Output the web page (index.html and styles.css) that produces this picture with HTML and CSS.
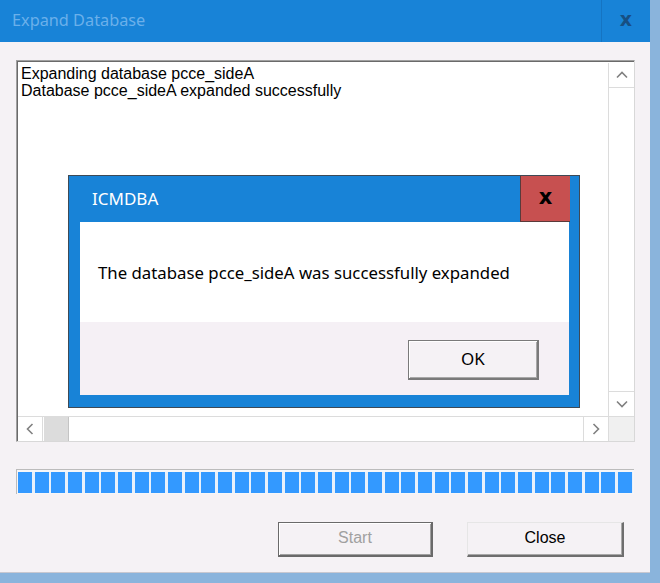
FILE: index.html
```html
<!DOCTYPE html>
<html>
<head>
<meta charset="utf-8">
<link rel="stylesheet" href="styles.css">
</head>
<body>
<div class="window">
  <div class="titlebar">
    <div class="title">Expand Database</div>
    <div class="tclose">x</div>
  </div>
  <div class="client">
    <div class="listbox">
      <div class="listtext">
        <div>Expanding database pcce_sideA</div>
        <div>Database pcce_sideA expanded successfully</div>
      </div>
      <div class="vscroll">
        <div class="arrowbtn"><svg width="14" height="10" viewBox="0 0 14 10"><path d="M2 7.5 L7 2.5 L12 7.5" fill="none" stroke="#808080" stroke-width="1.6"/></svg></div>
        <div class="track"></div>
        <div class="arrowbtn"><svg width="14" height="10" viewBox="0 0 14 10"><path d="M2 2.5 L7 7.5 L12 2.5" fill="none" stroke="#808080" stroke-width="1.6"/></svg></div>
      </div>
      <div class="hscroll">
        <div class="arrowbtn h"><svg width="10" height="14" viewBox="0 0 10 14"><path d="M7.5 2 L2.5 7 L7.5 12" fill="none" stroke="#808080" stroke-width="1.6"/></svg></div>
        <div class="thumb"></div>
        <div class="htrack"></div>
        <div class="arrowbtn h"><svg width="10" height="14" viewBox="0 0 10 14"><path d="M2.5 2 L7.5 7 L2.5 12" fill="none" stroke="#808080" stroke-width="1.6"/></svg></div>
      </div>
      <div class="corner"></div>
    </div>
    <div class="progress"><div class="fill"></div></div>
    <div class="buttons">
      <button class="btn start">Start</button>
      <button class="btn close">Close</button>
    </div>
  </div>

  <div class="dialog">
    <div class="dtitlebar">
      <div class="dtitle">ICMDBA</div>
      <div class="dclose">x</div>
    </div>
    <div class="dbody">
      <div class="dmsg">The database pcce_sideA was successfully expanded</div>
      <div class="dfoot">
        <button class="okbtn">OK</button>
      </div>
    </div>
  </div>
</div>
</body>
</html>
```

FILE: styles.css
```css
html, body {
  margin: 0;
  padding: 0;
}
body {
  width: 660px;
  height: 583px;
  background: #8ab4dc;
  overflow: hidden;
}
.window {
  position: relative;
  width: 650px;
  height: 572px;
  background: #f5f2f5;
  border-bottom: 1px solid #c8c8d0;
  display: flex;
  flex-direction: column;
}
.titlebar {
  height: 42px;
  background: #1883d7;
  display: flex;
  align-items: stretch;
}
.title {
  flex: 1;
  padding-left: 12px;
  line-height: 41px;
  font-family: "Noto Sans", "Open Sans", sans-serif;
  font-size: 16.3px;
  color: #6bb0ea;
}
.tclose {
  width: 48px;
  border-left: 1px solid #1574c2;
  text-align: center;
  line-height: 38px;
  font-family: "DejaVu Sans", sans-serif;
  font-weight: bold;
  font-size: 19px;
  color: #174f82;
}
.client {
  flex: 1;
  padding: 18px 16px 0 16px;
  display: flex;
  flex-direction: column;
}
.listbox {
  width: 616px;
  height: 378px;
  border-top: 1px solid #a0a0a0;
  border-left: 1px solid #a0a0a0;
  border-right: 1px solid #d8d8d8;
  border-bottom: 1px solid #d8d8d8;
  box-shadow: inset 1px 1px 0 #6a6a6a;
  background: #fff;
  display: grid;
  grid-template-columns: 1fr 26px;
  grid-template-rows: 1fr 25px;
  padding: 2px 0 0 1px;
  box-sizing: content-box;
}
.listtext {
  padding: 2px 3px;
  font-family: "Liberation Sans", Arial, sans-serif;
  font-size: 16px;
  line-height: 17px;
  color: #000;
}
.vscroll {
  display: flex;
  flex-direction: column;
  border-left: 1px solid #dcdcdc;
}
.arrowbtn {
  height: 24px;
  display: flex;
  align-items: center;
  justify-content: center;
  background: #fff;
}
.vscroll .arrowbtn:first-child { border-bottom: 1px solid #dcdcdc; }
.vscroll .arrowbtn:last-child { border-top: 1px solid #dcdcdc; }
.track { flex: 1; background: #fff; }
.hscroll {
  display: flex;
  border-top: 1px solid #dcdcdc;
}
.arrowbtn.h {
  width: 24px;
  height: auto;
}
.hscroll .arrowbtn.h:first-child { border-right: 1px solid #dcdcdc; }
.hscroll .arrowbtn.h:last-child { border-left: 1px solid #dcdcdc; }
.thumb {
  width: 24px;
  background: #dcdcdc;
  border-right: 1px solid #c4c4c4;
  margin-left: 1px;
}
.htrack { flex: 1; background: #fff; }
.corner {
  background: #f0f0f0;
  border-top: 1px solid #dcdcdc;
  border-left: 1px solid #dcdcdc;
}
.progress {
  margin-top: 27px;
  width: 618px;
  height: 25px;
  box-sizing: border-box;
  border-top: 1px solid #bcbcbc;
  border-left: 1px solid #bcbcbc;
  background: #f6f6f8;
  padding: 2px 1px 1px 1px;
}
.fill {
  height: 100%;
  background: repeating-linear-gradient(to right, #3399ff 0, #3399ff 14px, #e8f0fa 14px, #e8f0fa 16.67px);
}
.buttons {
  margin-top: 28px;
  display: flex;
  justify-content: flex-end;
  gap: 34px;
  padding-right: 10px;
}
.btn {
  height: 35px;
  box-sizing: border-box;
  background: #f5f2f5;
  font-family: "Liberation Sans", Arial, sans-serif;
  font-size: 16px;
  padding: 0 0 2px 0;
  margin: 0;
}
.start {
  width: 155px;
  color: #a0a0a0;
  border: 1px solid #6a6a6a;
  border-bottom-width: 2px;
  border-right-width: 2px;
  box-shadow: inset 1px 1px 0 #ffffff, inset -1px -1px 0 #a0a0a0;
}
.close {
  width: 157px;
  color: #000;
  border-top: 1px solid #e6e6e6;
  border-left: 1px solid #e6e6e6;
  border-right: 2px solid #6e6e6e;
  border-bottom: 2px solid #6e6e6e;
  box-shadow: inset -1px -1px 0 #a8a8a8;
}
.dialog {
  position: absolute;
  left: 68px;
  top: 175px;
  width: 512px;
  height: 233px;
  box-sizing: border-box;
  border: 1px solid #3e4a56;
  background: #1883d7;
  padding: 0 10px 12px 11px;
  display: flex;
  flex-direction: column;
}
.dtitlebar {
  height: 46px;
  display: flex;
  margin-right: -10px;
}
.dtitle {
  flex: 1;
  padding-left: 12px;
  line-height: 45px;
  font-family: "Noto Sans", "Open Sans", sans-serif;
  font-size: 17px;
  color: #fff;
}
.dclose {
  width: 49px;
  height: 45px;
  margin-right: 9px;
  background: #c75050;
  border-left: 1px solid #5a3a3a;
  border-bottom: 1px solid #5a3a3a;
  text-align: center;
  line-height: 42px;
  font-family: "DejaVu Sans", sans-serif;
  font-weight: bold;
  font-size: 21px;
  color: #000;
}
.dbody {
  flex: 1;
  background: #fff;
  display: flex;
  flex-direction: column;
}
.dmsg {
  height: 100px;
  box-sizing: border-box;
  padding: 39px 0 0 18px;
  font-family: "Noto Sans", "Open Sans", sans-serif;
  font-size: 16.8px;
  color: #000;
}
.dfoot {
  flex: 1;
  background: #f5f0f5;
  display: flex;
  justify-content: flex-end;
  padding: 18px 30px 0 0;
}
.okbtn {
  width: 131px;
  height: 40px;
  box-sizing: border-box;
  background: #f5f2f5;
  border: 1px solid #7a7a7a;
  border-right-width: 2px;
  border-bottom-width: 2px;
  box-shadow: inset 1px 1px 0 #ffffff, inset -1px -1px 0 #a8a8a8;
  font-family: "Noto Sans", "Open Sans", sans-serif;
  font-size: 17px;
  color: #000;
  padding: 0 0 2px 0;
}
```
